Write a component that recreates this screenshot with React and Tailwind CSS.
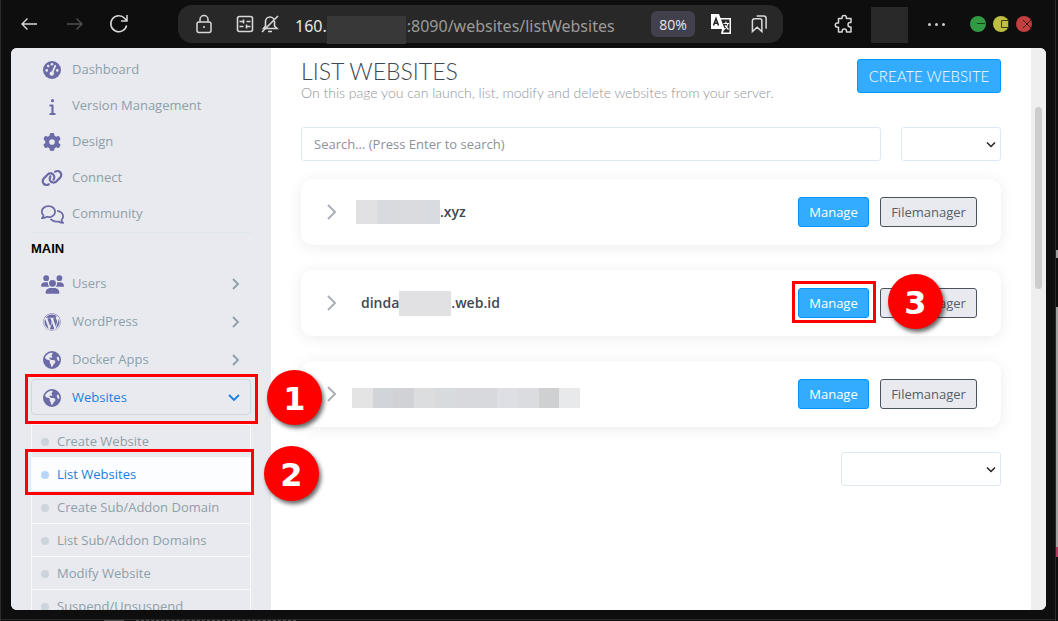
import { FaInfo, FaGear, FaLink, FaRegComments, FaUsers, FaEarthAmericas, FaWordpress } from "react-icons/fa6";

function DashboardIcon({ size }) {
  return (
    <svg viewBox="0 0 18 18" width={size} height={size} aria-hidden="true">
      <circle cx="9" cy="9" r="9" fill="currentColor" />
      <g fill="#e9eaef">
        <circle cx="3.7" cy="9.4" r="1.3" />
        <circle cx="5.2" cy="5" r="1.3" />
        <circle cx="9" cy="3.2" r="1.3" />
        <circle cx="14.3" cy="9.4" r="1.3" />
        <circle cx="8.8" cy="12.6" r="2.2" />
      </g>
      <path d="M9 12.500 12.200 4.900" stroke="#e9eaef" strokeWidth="1.8" strokeLinecap="round" />
    </svg>
  );
}

const topLinks = [
  ["Dashboard", DashboardIcon, 18],
  ["Version Management", FaInfo, 17],
  ["Design", FaGear, 18],
  ["Connect", FaLink, 22],
  ["Community", FaRegComments, 23],
];

const mainLinks = [
  ["Users", FaUsers, 23],
  ["WordPress", FaWordpress, 18],
  ["Docker Apps", FaEarthAmericas, 18],
];

const subLinks = ["Create Website", "List Websites", "Create Sub/Addon Domain", "List Sub/Addon Domains", "Modify Website", "Suspend/Unsuspend"];

function Chevron({ className, d, width = 1.8 }) {
  return (
    <svg viewBox="0 0 12 12" className={className} fill="none" stroke="currentColor" strokeWidth={width} aria-hidden="true">
      <path d={d} />
    </svg>
  );
}

function Badge({ n, className }) {
  return (
    <span className={"absolute z-20 flex size-[55px] items-center justify-center rounded-full bg-[#fe0000] pt-0.5 text-[32px] leading-none font-bold text-white font-['DejaVu_Sans',sans-serif] shadow-[2px_3px_4px_rgba(0,0,0,0.6)] " + className}>
      {n}
    </span>
  );
}

function Mosaic({ colors, className }) {
  return (
    <span className={"flex " + className} aria-hidden="true">
      {colors.map((c, i) => (
        <span key={i} className="flex-1" style={{ backgroundColor: c }} />
      ))}
    </span>
  );
}

function Toolbar() {
  return (
    <header className="flex h-12 items-center pr-[23px] pl-[19px] text-[#d8d8d8]">
      <button aria-label="Back" className="mr-7">
        <svg viewBox="0 0 18 18" className="size-[18px]" fill="none" stroke="currentColor" strokeWidth="1.4">
          <path d="M17 9H2M7.5 3.5 2 9l5.5 5.5" />
        </svg>
      </button>
      <button aria-label="Forward" className="mr-[25px] text-[#505050]">
        <svg viewBox="0 0 18 18" className="size-[18px]" fill="none" stroke="currentColor" strokeWidth="1.4">
          <path d="M1 9h15M10.5 3.5 16 9l-5.5 5.5" />
        </svg>
      </button>
      <button aria-label="Reload" className="mr-[49px]">
        <svg viewBox="0 0 20 20" className="size-5" fill="none" stroke="currentColor" strokeWidth="1.5">
          <path d="M17.6 11.5A8 8 0 1 1 15.8 4.5L17.5 6.200M18 1v6h-6" />
        </svg>
      </button>
      <div className="flex h-[38px] w-[605px] shrink items-center rounded-[14px] bg-[#282828] pl-[18px]">
        <svg viewBox="0 0 16 20" className="mr-6 h-5 w-4 shrink-0" fill="none" stroke="currentColor" strokeWidth="1.5">
          <rect x="1" y="8" width="14" height="10.5" rx="2" />
          <path d="M4 8V5.500a4 4 0 0 1 8 0V8M8 12v2" />
        </svg>
        <svg viewBox="0 0 18 18" className="mr-[7px] size-[18px] shrink-0" fill="none" stroke="currentColor" strokeWidth="1.6">
          <rect x="1.5" y="1.5" width="15" height="15" rx="2" />
          <path d="M3.500 6.500h5M7.500 4.500v4M10.500 6.500h4M3.500 11.500h4M10.500 9.500v4M10.500 11.500h4" />
        </svg>
        <svg viewBox="0 0 18 20" className="mr-4 h-5 w-[18px] shrink-0" fill="none" stroke="currentColor" strokeWidth="1.6">
          <path d="M2.500 14.500 4.500 12V7.500a4.500 4.500 0 0 1 9 0V12l2.500 2.500zM7 17.500h4M1 18 17 2" />
        </svg>
        <div className="flex items-center text-base leading-6 font-['Noto_Sans',sans-serif]">
          <span className="pt-1 text-[#e6e6e6]">160.</span>
          <span className="mt-3 mr-px h-7 w-[79px] bg-[#383838]" />
          <span className="pt-1 text-[#9b9b9b]">:8090/websites/listWebsites</span>
        </div>
        <button className="ml-auto h-[26px] w-11 shrink-0 rounded-md bg-[#42404d] pt-0.5 text-sm text-[#e6e6e6]">80%</button>
        <button aria-label="Translate" className="ml-4 shrink-0">
          <svg viewBox="0 0 20 20" className="size-5">
            <path d="M0 0h8l1.500 4H20v16H10l1-5H0z" fill="#fff" />
            <path d="M10 5.500h8.500v13H12l1.500-4z" fill="#282828" />
            <path d="M12.500 9.500h5.500M15 7.500v2M17 9.500c-.5 3-2 4.500-4 6M14 11.500l3.500 4" fill="none" stroke="#fff" strokeWidth="1.2" />
            <path d="M2.500 11.500 5 4.500l2.500 7M3.500 9.300h3" fill="none" stroke="#222" strokeWidth="1.5" />
          </svg>
        </button>
        <button aria-label="Bookmarks" className="mr-[15px] ml-5 shrink-0">
          <svg viewBox="0 0 18 20" className="h-5 w-[17px]" fill="none" stroke="currentColor" strokeWidth="1.6">
            <path d="M1.500 18V6.500a2 2 0 0 1 2-2h6a2 2 0 0 1 2 2V18l-5-4.500zM6 1.500h7.500a2.500 2.500 0 0 1 2.500 2.500v11" />
          </svg>
        </button>
      </div>
      <button aria-label="Extensions" className="ml-[51px]">
        <svg viewBox="0 0 20 20" className="size-5" fill="none" stroke="currentColor" strokeWidth="1.5" strokeLinejoin="round">
          <path d="M4.500 4.500h3.500V3.700a2.200 2.200 0 0 1 4.400 0v.8H17v4h-.8a2.200 2.200 0 0 0 0 4.400h.8V18h-4.500v-.8a2.200 2.200 0 0 0-4.400 0v.8H4.500v-4.700h-1a2.200 2.200 0 0 1 0-4.400h1z" />
        </svg>
      </button>
      <span className="mt-[2px] ml-[17px] h-9 w-[37px] bg-[#292929]" />
      <button aria-label="Menu" className="ml-5 flex gap-1">
        <i className="size-[3px] rounded-full bg-[#ccc]" />
        <i className="size-[3px] rounded-full bg-[#ccc]" />
        <i className="size-[3px] rounded-full bg-[#ccc]" />
      </button>
      <div className="ml-auto flex gap-[7px]">
        <button aria-label="Minimize" className="rounded-full bg-[#339a44]">
          <svg viewBox="0 0 16 16" className="size-4" stroke="#173e1d"><path d="M7 7.500h8" /></svg>
        </button>
        <button aria-label="Maximize" className="rounded-full bg-[#bfbe40]">
          <svg viewBox="0 0 16 16" className="size-4" fill="none" stroke="#3c3b16"><path d="M8.500 4.500h7v7h-7z" /></svg>
        </button>
        <button aria-label="Close" className="rounded-full bg-[#c2403f]">
          <svg viewBox="0 0 16 16" className="size-4" stroke="#4d1717"><path d="m7 4 8 8M15 4l-8 8" /></svg>
        </button>
      </div>
    </header>
  );
}

function NavLink({ label, Icon, size, className, children }) {
  return (
    <a href="#" className={"flex items-center text-[13px] text-[#8da0aa] " + className}>
      <span className="mr-2 flex w-6 justify-center text-[#6c6aa7]"><Icon size={size} /></span>
      {label}
      {children}
    </a>
  );
}

function Sidebar() {
  return (
    <nav className="w-[260px] shrink-0 bg-[#e9eaef] px-5 pt-1">
      <div className="border-b border-[#dde6ef]">
        {topLinks.map(([label, Icon, size]) => (
          <NavLink key={label} label={label} Icon={Icon} size={size} className="h-9 pl-[9px]" />
        ))}
      </div>
      <h2 className="pt-1.5 text-[13px] leading-5 font-bold text-black font-['Liberation_Sans',sans-serif]">MAIN</h2>
      <div className="mt-1.5">
        {mainLinks.map(([label, Icon, size]) => (
          <NavLink key={label} label={label} Icon={Icon} size={size} className="h-[38px] pr-[9px] pl-[9px]">
            <Chevron className="ml-auto size-3" d="m3 1 5 5-5 5" />
          </NavLink>
        ))}
      </div>
      <div className="relative">
        <NavLink label={<span className="text-[#1a7fe0]">Websites</span>} Icon={FaEarthAmericas} size={18} className="h-9 rounded-sm border border-[#d2d6dc] pt-0.5 pr-[10px] pl-2">
          <Chevron className="ml-auto size-3 text-[#1a7fe0]" d="m1 3 5 5 5-5" />
        </NavLink>
        <span className="pointer-events-none absolute -top-[5px] -left-1.5 h-[50px] w-[233px] border-[3px] border-[#fe0000]" />
        <Badge n="1" className="-top-[9px] left-[236px]" />
      </div>
      <ul className="mt-[9px] border border-[#f7f8fa] text-[13px]">
        {subLinks.map((label) => {
          const active = label === "List Websites";
          return (
            <li key={label} className={"relative h-[33px] border-b border-[#f7f8fa] " + (active ? "bg-[#fcfdff]" : "")}>
              <a href="#" className={"flex h-full items-center gap-2 pt-0.5 pl-[9px] " + (active ? "text-[#1a7fe0]" : "text-[#8da0aa]")}>
                <span className={"size-2 rounded-full " + (active ? "bg-[#b5d7f7]" : "bg-[#ced4dc]")} />
                {label}
              </a>
              {active && <span className="pointer-events-none absolute -top-[9px] -left-[7px] h-[46px] w-[229px] border-[3px] border-[#fe0000]" />}
              {active && <Badge n="2" className="-top-3 left-[232px]" />}
            </li>
          );
        })}
      </ul>
    </nav>
  );
}

function SelectBox({ label, className }) {
  return (
    <div className={"relative " + className}>
      <select aria-label={label} className="h-[34px] w-full appearance-none rounded-[3px] border border-[#dfe8f1] bg-white" />
      <Chevron className="pointer-events-none absolute top-3 right-1 size-3 text-[#222]" d="m2 3.500 4 4 4-4" width={1.5} />
    </div>
  );
}

function SiteCard({ children, marked }) {
  return (
    <article className="flex h-[66px] items-center rounded-xl bg-white px-6 shadow-[0_2px_15px_rgba(0,0,0,0.08)]">
      <button aria-label="Expand" className="mr-[17px] text-[#adafb7]">
        <svg viewBox="0 0 14 18" className="h-[18px] w-3.5" fill="none" stroke="currentColor" strokeWidth="2"><path d="m3 2 7 7-7 7" /></svg>
      </button>
      <h3 className="flex h-6 items-center text-sm font-semibold text-[#3e4855]">{children}</h3>
      <div className="ml-auto flex gap-[11px] text-[13px]">
        <div className="relative">
          <button className="h-[30px] w-[71px] rounded-[3px] border border-[#0095ff] bg-[#33abff] pt-px text-white">Manage</button>
          {marked && <span className="pointer-events-none absolute -top-[7px] -left-1.5 h-[42px] w-[84px] border-[3px] border-[#fe0000]" />}
        </div>
        <div className="relative">
          <button className="h-[30px] w-[97px] rounded-[3px] border border-[#4b535e] bg-[#e9eaef] pt-px text-[#565e69]">Filemanager</button>
          {marked && <Badge n="3" className="-top-3.5 left-2" />}
        </div>
      </div>
    </article>
  );
}

export default function App() {
  return (
    <div className="flex h-screen overflow-hidden bg-[#0e0e0e] font-['Open_Sans',sans-serif]">
      <div className="flex min-w-0 flex-1 flex-col border-x border-[#2b2b2b]">
        <Toolbar />
        <div className="mr-[9px] ml-[10px] flex min-h-0 flex-1 overflow-hidden rounded-md bg-white">
          <Sidebar />
          <main className="min-w-0 flex-1 px-[30px] pt-[11px]">
            <div className="flex items-start justify-between">
              <div className="font-light font-['Lato',sans-serif]">
                <h1 className="text-[23px] leading-6 text-[#3e4855]">LIST WEBSITES</h1>
                <p className="text-sm leading-5 text-[#8f949a]">On this page you can launch, list, modify and delete websites from your server.</p>
              </div>
              <button className="h-[34px] w-36 rounded-[3px] border border-[#0095ff] bg-[#33abff] text-[15px] font-light text-white font-['Lato',sans-serif]">CREATE WEBSITE</button>
            </div>
            <div className="mt-6 flex gap-5">
              <input aria-label="Search" placeholder="Search... (Press Enter to search)" className="h-[34px] min-w-0 flex-1 rounded-[3px] border border-[#dfe8f1] px-3 text-[13px] placeholder:text-[#8c9198]" />
              <SelectBox label="Items per page" className="w-[100px]" />
            </div>
            <div className="mt-[18px] flex flex-col gap-[25px]">
              <SiteCard>
                <Mosaic className="h-6 w-[84px]" colors={["#e1e1e3", "#d9dadf", "#dadbdf", "#d8dce0"]} />.xyz
              </SiteCard>
              <SiteCard marked>
                <span className="pl-[5px]">dinda</span>
                <Mosaic className="h-[25px] w-[52px]" colors={["#e1e1e3"]} />.web.id
              </SiteCard>
              <SiteCard>
                <Mosaic className="mt-2 -ml-1 h-5 w-[228px]" colors={["#e4e4e5", "#d1d4d9", "#d1d2d6", "#dcdddf", "#d7dbde", "#d8d9dc", "#d8d9dc", "#dedfe4", "#dbdcdf", "#cfd0d2", "#e8e9eb"]} />
              </SiteCard>
            </div>
            <SelectBox label="Page" className="mt-[25px] ml-auto w-40" />
          </main>
          <div className="w-[15px] shrink-0 bg-[#efefef] px-1 pt-[59px]">
            <div className="h-[182px] rounded-full bg-[#cdcdcd]" />
          </div>
        </div>
        <footer className="mt-[9px] flex h-[2px] items-start overflow-hidden border-t border-[#2b2b2b] pl-[103px]">
          <span className="h-1 w-5 bg-[#4a4a4a]" />
          <span className="ml-3 h-1 w-40 border-t border-dashed border-[#4a4a4a]" />
        </footer>
      </div>
      <div className="flex w-[2px] flex-col">
        <span className="basis-[250px] bg-[#0e0e0e]" />
        <span className="basis-2 bg-[#a0a0a0]" />
        <span className="basis-[49px] bg-[#0e0e0e]" />
        <span className="basis-60 bg-[#a0a0a0]" />
        <span className="basis-[10px] bg-[#b03a60]" />
      </div>
    </div>
  );
}
